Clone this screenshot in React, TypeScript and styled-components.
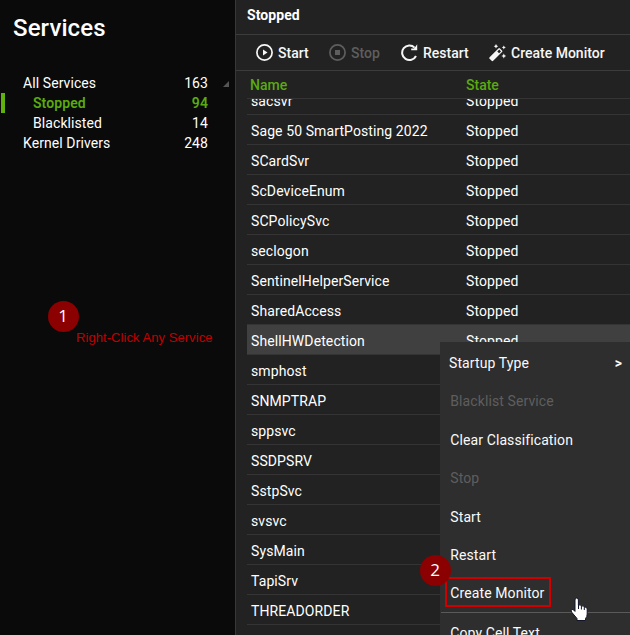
import React from 'react';
import styled, { createGlobalStyle } from 'styled-components';

const Global = createGlobalStyle`
  * { box-sizing: border-box; }
  body { margin: 0; background: #0a0a0a; font-family: Roboto, sans-serif; font-size: 14px; font-weight: 400; color: #fff; overflow: hidden; }
`;

const Window = styled.div`
  position: relative;
  display: grid;
  grid-template-columns: 235px 1fr;
  width: 630px;
  height: 635px;
  overflow: hidden;
  background: #222;
`;
const Sidebar = styled.aside`
  background: #0a0a0a;
`;
const Heading = styled.h1`
  margin: 0;
  padding: 12px 0 0 13px;
  height: 73px;
  font-size: 24px;
  line-height: 32px;
  font-weight: 500;
  letter-spacing: 0.1px;
`;
const NavItem = styled.div<{ $level?: number; $active?: boolean }>`
  display: flex;
  align-items: center;
  height: 20px;
  padding-left: ${(p) => (p.$level ? 33 : 23)}px;
  color: ${(p) => (p.$active ? '#5aaa10' : '#fff')};
  font-weight: ${(p) => (p.$active ? 600 : 400)};
  letter-spacing: 0.08px;
  box-shadow: ${(p) => (p.$active ? 'inset 1px 0 #0a0a0a, inset 5px 0 #62b00c' : 'none')};
`;
const NavCount = styled.span`
  margin-left: auto;
  width: 60px;
  text-align: right;
`;
const NavEnd = styled.span`
  display: flex;
  justify-content: flex-end;
  width: 27px;
  padding: 2px 6px 0 0;
`;
const Main = styled.main`
  display: flex;
  flex-direction: column;
  min-width: 0;
  border-left: 1px solid #383838;
`;
const Title = styled.header`
  height: 35px;
  padding: 0 0 4px 11px;
  line-height: 30px;
  font-weight: 700;
  letter-spacing: 0.08px;
  border-bottom: 1px solid #3c3c3c;
`;
const Toolbar = styled.div`
  display: flex;
  height: 36px;
  border-bottom: 1px solid #3c3c3c;
  padding-left: 20px;
`;
const Tool = styled.div<{ $w: number; $off?: boolean }>`
  display: flex;
  align-items: center;
  gap: 4px;
  width: ${(p) => p.$w}px;
  font-weight: 500;
  white-space: nowrap;
  color: ${(p) => (p.$off ? '#5e5e5e' : '#f6f6f6')};
  svg { flex: none; }
`;
const Columns = styled.div`
  display: grid;
  grid-template-columns: 216px 1fr;
  margin-left: 11px;
  height: 28px;
  padding-left: 3px;
  line-height: 29px;
  font-weight: 500;
  color: #5aaa10;
  border-bottom: 1px solid #343434;
`;
const Rows = styled.div`
  flex: 1;
  overflow: hidden;
  margin-left: 11px;
`;
const Shift = styled.div`
  margin-top: -14px;
`;
const Row = styled.div<{ $selected?: boolean }>`
  display: grid;
  grid-template-columns: 215px 1fr;
  height: 30px;
  padding-left: 4px;
  line-height: 33px;
  letter-spacing: 0.1px;
  border-bottom: 1px solid #343434;
  background: ${(p) => (p.$selected ? '#404040' : 'transparent')};
`;
const Menu = styled.div`
  position: absolute;
  left: 440px;
  top: 342px;
  width: 190px;
  height: 293px;
  overflow: hidden;
  background: #2e2e2e;
`;
const MenuItem = styled.div<{ $h: number; $off?: boolean; $first?: boolean }>`
  display: flex;
  align-items: center;
  justify-content: space-between;
  height: ${(p) => p.$h}px;
  padding: ${(p) => (p.$first ? '2px 8px 0 9px' : '0 8px 0 10.3px')};
  letter-spacing: 0.1px;
  color: ${(p) => (p.$off ? '#5e5e5e' : '#fafafa')};
`;
const Chevron = styled.span`
  font-weight: 700;
  line-height: 16px;
`;
const Divider = styled.div`
  height: 1px;
  margin-left: 1px;
  background: #5a5a5a;
`;
const Marker = styled.div<{ $x: number; $y: number }>`
  position: absolute;
  left: ${(p) => p.$x}px;
  top: ${(p) => p.$y}px;
  width: 31px;
  height: 31px;
  border-radius: 50%;
  background: #8b0000;
  color: #fff;
  font: 17px/30px 'Open Sans', sans-serif;
  text-align: center;
  padding-right: 1px;
`;
const Hint = styled.div`
  position: absolute;
  left: 76px;
  top: 329px;
  font: 13px/17px 'Liberation Sans', sans-serif;
  letter-spacing: 0.06px;
  color: #c00000;
  white-space: nowrap;
`;
const Highlight = styled.div`
  position: absolute;
  left: 445px;
  top: 577px;
  width: 106px;
  height: 30px;
  border: 2px solid #d00000;
`;
const Pointer = styled.svg`
  position: absolute;
  left: 570px;
  top: 597px;
`;

const PlayIcon = () => (
  <svg width="18" height="18" viewBox="0 0 18 18">
    <circle cx="8.5" cy="8.5" r="7.6" fill="none" stroke="#f6f6f6" strokeWidth="1.7" />
    <path d="M7 5.5v6l4.500-3z" fill="#f6f6f6" />
  </svg>
);
const StopIcon = () => (
  <svg width="18" height="18" viewBox="0 0 18 18">
    <circle cx="8.5" cy="8.5" r="7.6" fill="none" stroke="#5e5e5e" strokeWidth="1.7" />
    <path d="M6 6h5v5H6z" fill="#5e5e5e" />
  </svg>
);
const RestartIcon = () => (
  <svg width="18" height="18" viewBox="0 0 18 18">
    <path d="M13.600 3.600A7.300 7.300 0 1 0 15 12" fill="none" stroke="#f6f6f6" strokeWidth="2" />
    <path d="M16.200.3v6h-6V4.600h2.800l1.800-2.400z" fill="#f6f6f6" />
  </svg>
);
const WandIcon = () => (
  <svg width="18" height="18" viewBox="0 0 18 18">
    <g fill="#f6f6f6">
      <path fillRule="evenodd" d="M.6 13.200 9.400 4.400q.8-.8 1.600 0l2 2q.8.8 0 1.600l-8.800 8.800q-.8.8-1.600 0l-2-2q-.8-.8 0-1.600zM8.300 7.500l1.800 1.800 1.900-1.900-1.800-1.800z" />
      <path d="m7 0 .8 1.400 1.400.8-1.400.8L7 4.400 6.200 3l-1.400-.8 1.400-.8zM14.800 1.400l.7 1.300 1.300.7-1.300.7-.7 1.300-.7-1.300-1.300-.7 1.300-.7zM14.800 9.600l.8 1.600 1.600.8-1.600.8-.8 1.600-.8-1.600-1.600-.8 1.600-.8z" />
    </g>
  </svg>
);

const services = ['sacsvr', 'Sage 50 SmartPosting 2022', 'SCardSvr', 'ScDeviceEnum', 'SCPolicySvc', 'seclogon', 'SentinelHelperService', 'SharedAccess', 'ShellHWDetection', 'smphost', 'SNMPTRAP', 'sppsvc', 'SSDPSRV', 'SstpSvc', 'svsvc', 'SysMain', 'TapiSrv', 'THREADORDER', 'TieringEngineService'];

const menu = [
  { label: 'Startup Type', h: 40, first: true },
  { label: 'Blacklist Service', h: 38, off: true },
  { label: 'Clear Classification', h: 39 },
  { label: 'Stop', h: 38, off: true },
  { label: 'Start', h: 39 },
  { label: 'Restart', h: 38 },
  { label: 'Create Monitor', h: 38 },
];

export default function App() {
  return (
    <Window>
      <Global />
      <Sidebar>
        <Heading>Services</Heading>
        <NavItem>
          All Services<NavCount>163</NavCount>
          <NavEnd><svg width="6" height="6" viewBox="0 0 6 6"><path d="M6 0v6H0z" fill="#555" /></svg></NavEnd>
        </NavItem>
        <NavItem $level={1} $active>Stopped<NavCount>94</NavCount><NavEnd /></NavItem>
        <NavItem $level={1}>Blacklisted<NavCount>14</NavCount><NavEnd /></NavItem>
        <NavItem>Kernel Drivers<NavCount>248</NavCount><NavEnd /></NavItem>
      </Sidebar>
      <Main>
        <Title>Stopped</Title>
        <Toolbar>
          <Tool $w={73}><PlayIcon />Start</Tool>
          <Tool $w={72} $off><StopIcon />Stop</Tool>
          <Tool $w={88}><RestartIcon />Restart</Tool>
          <Tool $w={120}><WandIcon />Create Monitor</Tool>
        </Toolbar>
        <Columns><span>Name</span><span>State</span></Columns>
        <Rows>
          <Shift>
            {services.map((name) => (
              <Row key={name} $selected={name === 'ShellHWDetection'}>
                <span>{name}</span>
                <span>Stopped</span>
              </Row>
            ))}
          </Shift>
        </Rows>
      </Main>
      <Menu>
        {menu.map((m) => (
          <MenuItem key={m.label} $h={m.h} $off={m.off} $first={m.first}>
            {m.label}
            {m.first && <Chevron>&gt;</Chevron>}
          </MenuItem>
        ))}
        <Divider />
        <MenuItem $h={40}>Copy Cell Text</MenuItem>
      </Menu>
      <Hint>Right-Click Any Service</Hint>
      <Highlight />
      <Marker $x={48} $y={301}>1</Marker>
      <Marker $x={420} $y={555}>2</Marker>
      <Pointer width="19" height="25" viewBox="0 0 19 25">
        <path
          d="M5 3q0-2 1.700-2T8.400 3v5q2.600-.6 3 1 2.500-.6 3 1 2.800-.3 2.800 2v5q0 3-1.700 4.500v2H7v-2L1.500 15q-1-2.200.6-2.600 1.400 0 2.900 2z"
          fill="#fff"
          stroke="#11152a"
          strokeWidth="1"
        />
        <path d="M8.500 8v4M11.400 9v3.500M14.300 10v3" stroke="#11152a" strokeWidth="1" />
      </Pointer>
    </Window>
  );
}
